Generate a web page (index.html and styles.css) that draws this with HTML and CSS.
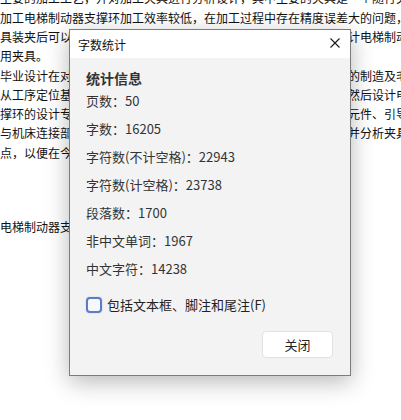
FILE: index.html
```html
<!DOCTYPE html>
<html lang="zh-CN">
    <head>
        <meta name="viewport" content="width=device-width, initial-scale=1.0">
        <title>字数统计</title>
        <link rel="stylesheet" href="styles.css">
    </head>
    <body>
        <div class="doc">
            <p class="doc__line">主要的加工工艺，并对加工夹具进行分析设计，其中主要的夹具是一个随行夹具</p>
            <p class="doc__line">加工电梯制动器支撑环加工效率较低，在加工过程中存在精度误差大的问题，</p>
            <p class="doc__line">具装夹后可以满足加工要求，提高生产效率，降低劳动强度，故设计电梯制动器</p>
            <p class="doc__line">用夹具。</p>
            <p class="doc__line">毕业设计在对电梯制动器支撑环的结构进行分析后，研究了支撑环的制造及毛坯</p>
            <p class="doc__line">从工序定位基准的选择入手，确定了加工工艺路线和切削用量等，然后设计电梯</p>
            <p class="doc__line">撑环的设计专用夹具，包括夹具体、定位元件、夹紧机构、对刀块元件、引导元件</p>
            <p class="doc__line">与机床连接部分的设计，绘制夹具装配图和零件图，计算定位误差并分析夹具的精度</p>
            <p class="doc__line">点，以便在今后的生产中推广应用。</p>
            <p class="doc__line doc__line--gap">电梯制动器支撑环专用夹具设计</p>
        </div>

        <div class="dialog">
            <div class="dialog__title">
                <span>字数统计</span>
                <svg class="dialog__close" width="10" height="10" viewBox="0 0 10 10">
                    <path d="M0.5 0.5 L9.5 9.5 M9.5 0.5 L0.5 9.5" stroke="#1a1a1a" stroke-width="1.1" fill="none"/>
                </svg>
            </div>
            <div class="dialog__body">
                <div class="stats__heading">统计信息</div>
                <ul class="stats">
                    <li>页数：50</li>
                    <li>字数：16205</li>
                    <li>字符数(不计空格)：22943</li>
                    <li>字符数(计空格)：23738</li>
                    <li>段落数：1700</li>
                    <li>非中文单词：1967</li>
                    <li>中文字符：14238</li>
                </ul>
                <label class="option">
                    <span class="option__box"></span>
                    <span>包括文本框、脚注和尾注(F)</span>
                </label>
                <div class="dialog__actions">
                    <button class="btn">关闭</button>
                </div>
            </div>
        </div>
    </body>
</html>
```

FILE: styles.css
```css
html, body {
    margin: 0;
    height: 100%;
    overflow: hidden;
    background: #fff;
}
body {
    position: relative;
    font-family: "Noto Sans CJK SC", "Noto Sans", sans-serif;
}
.doc {
    margin-top: -11.6px;
    color: #111;
    font-size: 12px;
}
.doc__line {
    margin: 0;
    line-height: 19.3px;
    height: 19.3px;
    white-space: nowrap;
    overflow: hidden;
}
.doc__line--gap {
    margin-top: 55.3px;
}
.dialog {
    position: absolute;
    left: 69px;
    top: 29px;
    width: 280px;
    background: #f3f3f3;
    border: 1px solid #7c7c7c;
    box-shadow: 0 6px 22px rgba(0, 0, 0, 0.28);
}
.dialog__title {
    display: flex;
    align-items: center;
    justify-content: space-between;
    height: 28px;
    padding: 0 10px 0 8px;
    background: #fff;
    color: #111;
    font-size: 12px;
}
.dialog__close {
    margin-top: -2px;
}
.dialog__body {
    padding: 10px 17px 17px 16px;
    color: #333;
}
.stats__heading {
    font-size: 14px;
    font-weight: bold;
    line-height: 20px;
    color: #333;
}
.stats {
    list-style: none;
    margin: 3px 0 0;
    padding: 0;
    display: flex;
    flex-direction: column;
    gap: 8px;
    font-size: 13px;
    line-height: 20px;
}
.option {
    display: flex;
    align-items: center;
    gap: 5px;
    margin-top: 16px;
    font-size: 13px;
    line-height: 20px;
    color: #222;
}
.option__box {
    width: 12px;
    height: 12px;
    border: 2px solid #5b7dc6;
    border-radius: 4px;
    background: #f7f8fb;
    box-shadow: 0 0 2px rgba(91, 125, 198, 0.35);
}
.dialog__actions {
    display: flex;
    justify-content: flex-end;
    margin-top: 16px;
}
.btn {
    width: 71px;
    height: 27px;
    padding: 0;
    border: 1px solid #e1e1e1;
    border-radius: 4px;
    background: #fff;
    color: #222;
    font-family: inherit;
    font-size: 13px;
}
```
